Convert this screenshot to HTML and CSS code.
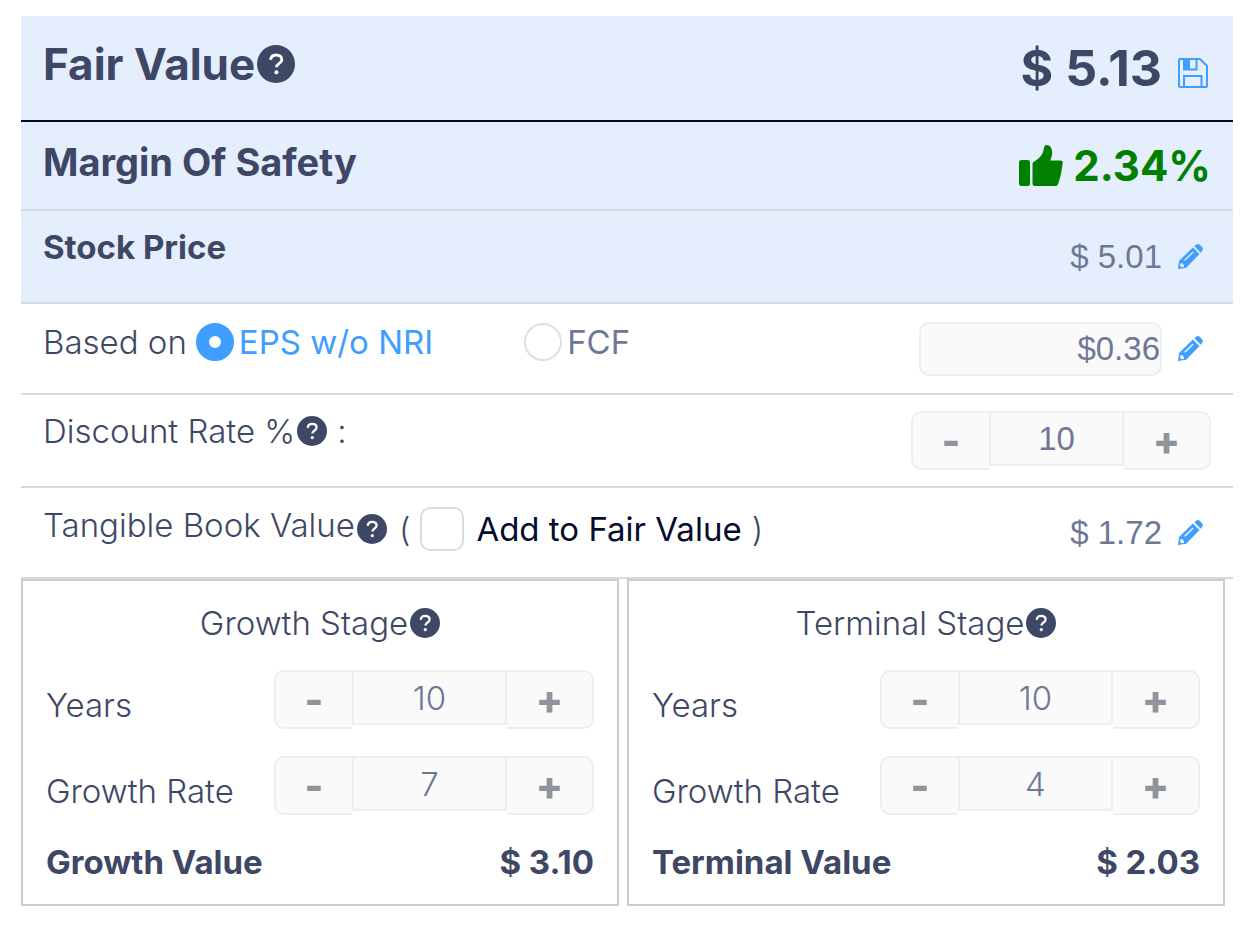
FILE: index.html
```
<!DOCTYPE html>
<html lang="en">
  <head>
    <meta charset="utf-8">
    <title>Fair Value Calculator</title>
    <link rel="stylesheet" href="styles.css">
  </head>
  <body>
    <!-- shared icons -->
    <svg class="sprite" aria-hidden="true">
      <symbol id="help" viewBox="0 0 30 30">
        <circle cx="15" cy="15" r="15" fill="#3e4765"/>
        <path d="M10.700 11.800c.3-2.500 2-3.900 4.400-3.900 2.500 0 4.500 1.400 4.500 3.700 0 3-4.200 2.800-4.200 6" fill="none" stroke="#fff" stroke-width="2.300"/>
        <circle cx="15.300" cy="21.600" r="1.600" fill="#fff"/>
      </symbol>
      <symbol id="pencil" viewBox="0 0 26 26">
        <path fill="#409eff" fill-rule="evenodd" d="M0 26l1.200-8.500L15.500 3.600l6.900 6.900L8.500 24.800zM2.600 20l-.5 2.600 1.500 1.500 2.600-.5v-2.300H4.900V20zM6.500 16.500l1 1 8.800-8.800-1-1z"/>
        <path fill="#409eff" d="M17 2.400L18.800.9q1.900-1.600 3.800 0l2.500 2.500q1.600 1.900 0 3.800L23.600 9z"/>
      </symbol>
    </svg>

    <div class="calculator">
      <div class="row row-total">
        <div class="label label-xl">Fair Value<svg class="help help-lg"><use href="#help"/></svg></div>
        <div class="value value-xl">
          <span class="amount">$ 5.13</span>
          <button class="icon-btn" aria-label="Save">
            <svg class="save" viewBox="0 0 30 30">
              <path d="M2 1h20l7 7v20q0 1-1 1H2q-1 0-1-1V2q0-1 1-1z" fill="none" stroke="#409eff" stroke-width="2"/>
              <path d="M6 1v10.500h12.500V1M6 29V18h17.500v11" fill="none" stroke="#409eff" stroke-width="2"/>
              <path d="M6 1h6v10H6z" fill="#409eff"/>
            </svg>
          </button>
        </div>
      </div>

      <div class="row row-shaded">
        <div class="label label-lg">Margin Of Safety</div>
        <div class="value value-lg">
          <svg class="thumb" viewBox="0 0 44 42">
            <rect x="0" y="15" width="11" height="26" rx="2.500" fill="green"/>
            <path fill="green" d="M13.500 19q0-1.600 1.300-2.300c4.700-2.400 9-6.700 9.800-12C25 1.900 25.700 0 27.600 0c3.600 0 5.600 3.400 5.600 7.600 0 3.200-.9 5.600-2 7.900h10.300q2.500 0 2.200 2.600c-1 8-2.300 15.200-4.600 20.800-.6 1.500-1.300 2.100-2.800 2.100H16q-2.500 0-2.500-2.500z"/>
          </svg>
          <span>2.34%</span>
        </div>
      </div>

      <div class="row row-shaded row-tall">
        <div class="label label-bold">Stock Price</div>
        <div class="value">
          <span class="amount">$ 5.01</span>
          <button class="icon-btn" aria-label="Edit stock price"><svg class="pencil"><use href="#pencil"/></svg></button>
        </div>
      </div>

      <div class="row">
        <div class="label basis">
          <span>Based on</span>
          <label class="radio"><input type="radio" name="basis" checked><span>EPS w/o NRI</span></label>
          <label class="radio"><input type="radio" name="basis"><span>FCF</span></label>
        </div>
        <div class="value">
          <input class="eps" type="text" value="$0.36" aria-label="EPS w/o NRI">
          <button class="icon-btn" aria-label="Edit EPS"><svg class="pencil"><use href="#pencil"/></svg></button>
        </div>
      </div>

      <div class="row row-tall">
        <label class="label" for="discount">Discount Rate %<svg class="help"><use href="#help"/></svg><span class="colon">:</span></label>
        <div class="stepper stepper-sm">
          <button class="minus" aria-label="Decrease">-</button>
          <input type="text" id="discount" value="10">
          <button class="plus" aria-label="Increase">+</button>
        </div>
      </div>

      <div class="row">
        <div class="label book">
          <span class="book-name">Tangible Book Value</span>
          <div class="book-add">
            <svg class="help"><use href="#help"/></svg>
            <span class="paren">(</span>
            <input type="checkbox" id="add-book">
            <label for="add-book">Add to Fair Value</label>
            <span class="paren">)</span>
          </div>
        </div>
        <div class="value">
          <span class="amount">$ 1.72</span>
          <button class="icon-btn" aria-label="Edit tangible book value"><svg class="pencil"><use href="#pencil"/></svg></button>
        </div>
      </div>

      <div class="stages">
        <div class="stage">
          <div class="stage-title">Growth Stage<svg class="help"><use href="#help"/></svg></div>
          <div class="field">
            <label for="growth-years">Years</label>
            <div class="stepper">
              <button class="minus" aria-label="Decrease">-</button>
              <input type="text" id="growth-years" value="10">
              <button class="plus" aria-label="Increase">+</button>
            </div>
          </div>
          <div class="field">
            <label for="growth-rate">Growth Rate</label>
            <div class="stepper">
              <button class="minus" aria-label="Decrease">-</button>
              <input type="text" id="growth-rate" value="7">
              <button class="plus" aria-label="Increase">+</button>
            </div>
          </div>
          <div class="result"><span>Growth Value</span><span>$ 3.10</span></div>
        </div>

        <div class="stage">
          <div class="stage-title">Terminal Stage<svg class="help"><use href="#help"/></svg></div>
          <div class="field">
            <label for="terminal-years">Years</label>
            <div class="stepper">
              <button class="minus" aria-label="Decrease">-</button>
              <input type="text" id="terminal-years" value="10">
              <button class="plus" aria-label="Increase">+</button>
            </div>
          </div>
          <div class="field">
            <label for="terminal-rate">Growth Rate</label>
            <div class="stepper">
              <button class="minus" aria-label="Decrease">-</button>
              <input type="text" id="terminal-rate" value="4">
              <button class="plus" aria-label="Increase">+</button>
            </div>
          </div>
          <div class="result"><span>Terminal Value</span><span>$ 2.03</span></div>
        </div>
      </div>
    </div>
  </body>
</html>
```
FILE: styles.css
```
* {
  box-sizing: border-box;
}

body {
  margin: 16px 19px 16px 21px;
  font-family: Inter, "Liberation Sans", sans-serif;
  font-size: 33px;
  font-weight: 300;
  line-height: 40px;
  color: #3e4765;
  background-color: #fff;
}

button, input {
  margin: 0;
  padding: 0;
  font: inherit;
}

svg {
  display: block;
  flex: none;
}

.sprite {
  width: 0;
  height: 0;
  position: absolute;
}

/* rows */
.row {
  display: flex;
  justify-content: space-between;
  align-items: center;
  min-height: 91px;
  padding: 0 22px;
  border-bottom: 2px solid #d5dade;
}

.row-tall {
  min-height: 93px;
}

.row-shaded, .row-total {
  background-color: #e4eefd;
}

.row-shaded {
  min-height: 89px;
}

.row-shaded.row-tall {
  min-height: 93px;
}

.row-total {
  min-height: 106px;
  border-bottom-color: #050c2e;
}

.label {
  display: flex;
  align-items: center;
  align-self: flex-start;
  padding-top: 16px;
}

.label-xl {
  font-size: 44px;
  font-weight: 700;
  line-height: 64px;
}

.label-lg {
  font-size: 38px;
  font-weight: 700;
  line-height: 48px;
}

.label-bold {
  font-weight: 700;
}

.help {
  width: 30px;
  height: 30px;
  margin-left: 2px;
}

.help-lg {
  width: 38px;
  height: 38px;
}

.colon {
  margin-left: 10px;
}

/* right hand values */
.value {
  display: flex;
  align-items: center;
  font-family: "Liberation Sans", Arial, sans-serif;
  font-weight: 400;
  color: #6e7896;
}

.value-xl {
  font-family: Inter, "Liberation Sans", sans-serif;
  font-size: 50px;
  font-weight: 700;
  color: #3e4765;
}

.value-lg {
  gap: 10px;
  font-family: Inter, "Liberation Sans", sans-serif;
  font-size: 42px;
  font-weight: 700;
  color: green;
}

.icon-btn {
  display: flex;
  justify-content: flex-start;
  width: 33px;
  margin-left: 16px;
  border: 0;
  background: none;
}

.save {
  width: 30px;
  height: 30px;
  margin-top: 10px;
}

.pencil {
  width: 25px;
  height: 25px;
}

.thumb {
  width: 44px;
  height: 42px;
}

.eps {
  width: 243px;
  height: 54px;
  border: 2px solid #ebeff3;
  border-radius: 10px;
  background-color: #fafafa;
  color: #6e7896;
  text-align: right;
}

/* based on */
.basis {
  line-height: 44px;
}

.radio {
  display: flex;
  align-items: center;
  gap: 5px;
  margin-left: 9px;
  font-weight: 400;
  color: #6e7896;
}

.radio + .radio {
  margin-left: 91px;
}

.radio input {
  appearance: none;
  width: 38px;
  height: 38px;
  border: 2px solid #dcdfe6;
  border-radius: 50%;
  background-color: #fff;
}

.radio input:checked {
  border: 13px solid #409eff;
}

.radio input:checked + span {
  color: #409eff;
}

/* tangible book value */
.book {
  align-items: flex-start;
}

.book-name {
  line-height: 42px;
}

.book-add {
  display: flex;
  align-items: center;
  line-height: 50px;
}

.book-add label {
  margin: 0 10px 0 12px;
  font-weight: 400;
  color: #050c2e;
}

.book-add input {
  appearance: none;
  width: 44px;
  height: 44px;
  margin-left: 10px;
  border: 2px solid #d5dce3;
  border-radius: 10px;
  background-color: #fff;
}

.paren {
  margin-left: 12px;
}

.book-add label + .paren {
  margin-left: 0;
}

/* stepper */
.stepper {
  display: flex;
  align-items: flex-start;
  width: 320px;
}

.stepper-sm {
  width: 300px;
}

.stepper button {
  height: 59px;
  border: 2px solid #ebeff3;
  background-color: #fafafa;
  color: #909399;
  font-size: 40px;
  font-weight: 800;
}

.stepper .minus {
  width: 78px;
  border-right: 0;
  border-radius: 10px 0 0 10px;
}

.stepper .plus {
  width: 87px;
  border-left: 0;
  border-radius: 0 10px 10px 0;
}

.stepper input {
  flex: 1;
  min-width: 0;
  height: 55px;
  border: 2px solid #ebeff3;
  border-radius: 0;
  background-color: #fafafa;
  color: #6e7896;
  text-align: center;
}

.stepper-sm input {
  font-family: "Liberation Sans", Arial, sans-serif;
  font-weight: 400;
}

/* stages */
.stages {
  display: flex;
}

.stage {
  flex: 1;
  margin-right: 8px;
  padding: 22px 23px;
  border: 2px solid #ccc;
}

.stage-title {
  display: flex;
  justify-content: center;
  align-items: center;
  margin-bottom: 27px;
}

.field {
  display: flex;
  justify-content: space-between;
  align-items: center;
  margin-bottom: 27px;
}

.field label {
  padding-top: 10px;
}

.result {
  display: flex;
  justify-content: space-between;
  font-weight: 700;
}
```
